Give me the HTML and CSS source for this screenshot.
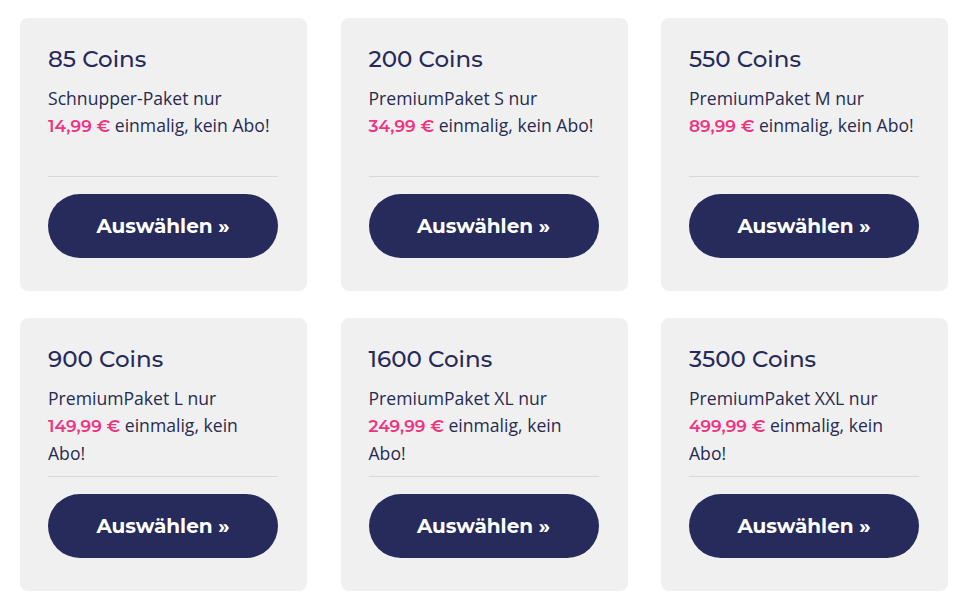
FILE: index.html
```html
<!DOCTYPE html>
<html lang="de">
<head>
<meta charset="utf-8">
<title>Coins kaufen</title>
<link rel="stylesheet" href="styles.css">
</head>
<body>
<div class="packages">

	<div class="package">
		<h3 class="package-title">85 Coins</h3>
		<p class="package-text">Schnupper-Paket nur<br><span class="price">14,99 €</span> einmalig, kein Abo!</p>
		<a class="package-button" href="#">Auswählen »</a>
	</div>

	<div class="package">
		<h3 class="package-title">200 Coins</h3>
		<p class="package-text">PremiumPaket S nur<br><span class="price">34,99 €</span> einmalig, kein Abo!</p>
		<a class="package-button" href="#">Auswählen »</a>
	</div>

	<div class="package">
		<h3 class="package-title">550 Coins</h3>
		<p class="package-text">PremiumPaket M nur<br><span class="price">89,99 €</span> einmalig, kein Abo!</p>
		<a class="package-button" href="#">Auswählen »</a>
	</div>

	<div class="package">
		<h3 class="package-title">900 Coins</h3>
		<p class="package-text">PremiumPaket L nur<br><span class="price">149,99 €</span> einmalig, kein Abo!</p>
		<a class="package-button" href="#">Auswählen »</a>
	</div>

	<div class="package">
		<h3 class="package-title">1600 Coins</h3>
		<p class="package-text">PremiumPaket XL nur<br><span class="price">249,99 €</span> einmalig, kein Abo!</p>
		<a class="package-button" href="#">Auswählen »</a>
	</div>

	<div class="package">
		<h3 class="package-title">3500 Coins</h3>
		<p class="package-text">PremiumPaket XXL nur<br><span class="price">499,99 €</span> einmalig, kein Abo!</p>
		<a class="package-button" href="#">Auswählen »</a>
	</div>

</div>
</body>
</html>
```

FILE: styles.css
```css
html { margin: 0 }
body {

	margin: 0;
	background: #fff;
	font-family: "Open Sans", "Liberation Sans", sans-serif;
	color: #282b50;
}

.packages {

	display: grid;
	grid-template-columns: repeat(3, 287px);
	column-gap: 33.5px;
	row-gap: 27px;
	padding: 18px 0 0 20px;
}

/*

	one coin package
*/
.package {

	background: #f0f0f1;
	border-radius: 8px;
	padding: 28px 29px 33px 28px;
	display: flex;
	flex-direction: column;
}

.package-title {

	font-family: Montserrat, "DejaVu Sans", sans-serif;
	font-weight: 500;
	font-size: 23px;
	line-height: 26px;
	color: #262a58;
	margin: 0 0 13px;
}

.package-text {

	font-size: 17.6px;
	font-weight: 500;
	line-height: 27px;
	height: 81px;
	margin: 0;
	padding-bottom: 10px;
	border-bottom: 1px solid #d9d9dc;
}

.price {

	font-family: Montserrat, "DejaVu Sans", sans-serif;
	font-weight: 600;
	font-size: 17px;
	color: #ef3480;
}

.package-button {

	display: block;
	margin-top: 17px;
	height: 64px;
	line-height: 64px;
	border-radius: 32px;
	background: #272b5b;
	color: #fff;
	text-align: center;
	text-decoration: none;
	font-family: Montserrat, "DejaVu Sans", sans-serif;
	font-weight: bold;
	font-size: 20px;
}
```
